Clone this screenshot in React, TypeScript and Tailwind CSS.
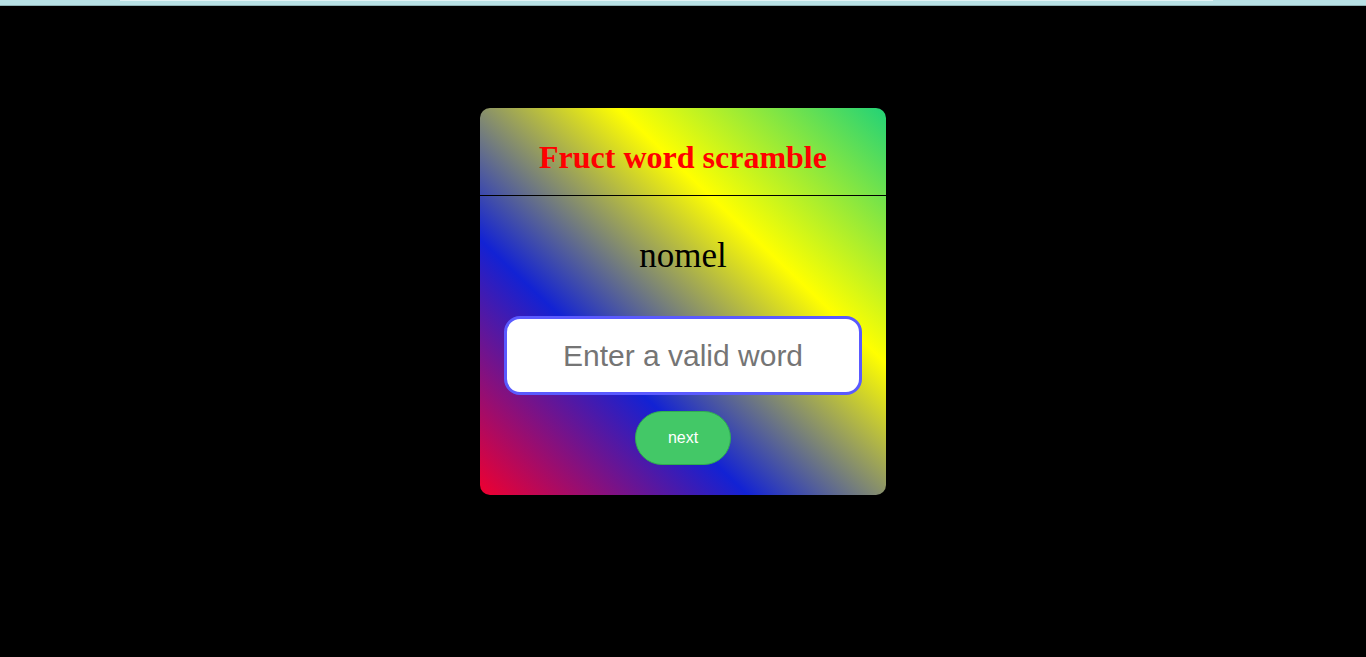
export default function App() {
  return (
    <div className="min-h-[657px] bg-black">
      {/* top strip */}
      <div className="relative h-[6px] border-b border-[#8fb3b6] bg-[#b8e1e5]">
        <div className="absolute left-[120px] top-0 h-px w-[1093px] bg-[#e3f3f5]" />
      </div>

      <div className="flex justify-center pt-[102px]">
        <div className="w-[406px] overflow-hidden rounded-[10px] bg-[linear-gradient(to_top_right,#f0002f_0%,#1222d4_33%,#ffff00_67%,#22d277_100%)]">
          <div className="flex h-[88px] items-center justify-center border-b border-black pt-[10px]">
            <h1
              className="text-[32px] leading-[36px] font-bold text-[#ff0000]"
              style={{ fontFamily: '"Liberation Serif", "Times New Roman", serif' }}
            >
              Fruct word scramble
            </h1>
          </div>

          <div className="flex flex-col items-center px-6 pb-[30px] pt-[40px]">
            <p
              className="text-[35px] leading-[40px] text-black"
              style={{ fontFamily: '"Liberation Serif", "Times New Roman", serif' }}
            >
              nomel
            </p>

            <input
              type="text"
              placeholder="Enter a valid word"
              className="mt-[40px] h-[79px] w-[358px] rounded-[16px] border-[3px] border-[#5a5aff] bg-white text-center text-[30px] text-[#333] outline-none placeholder:text-[#757575]"
              style={{ fontFamily: '"Liberation Sans", Arial, sans-serif' }}
            />

            <button
              className="mt-[16px] h-[54px] w-[96px] rounded-full border border-[#2fae50] bg-[#43c867] text-[16px] text-white"
              style={{ fontFamily: '"Liberation Sans", Arial, sans-serif' }}
            >
              next
            </button>
          </div>
        </div>
      </div>
    </div>
  );
}
